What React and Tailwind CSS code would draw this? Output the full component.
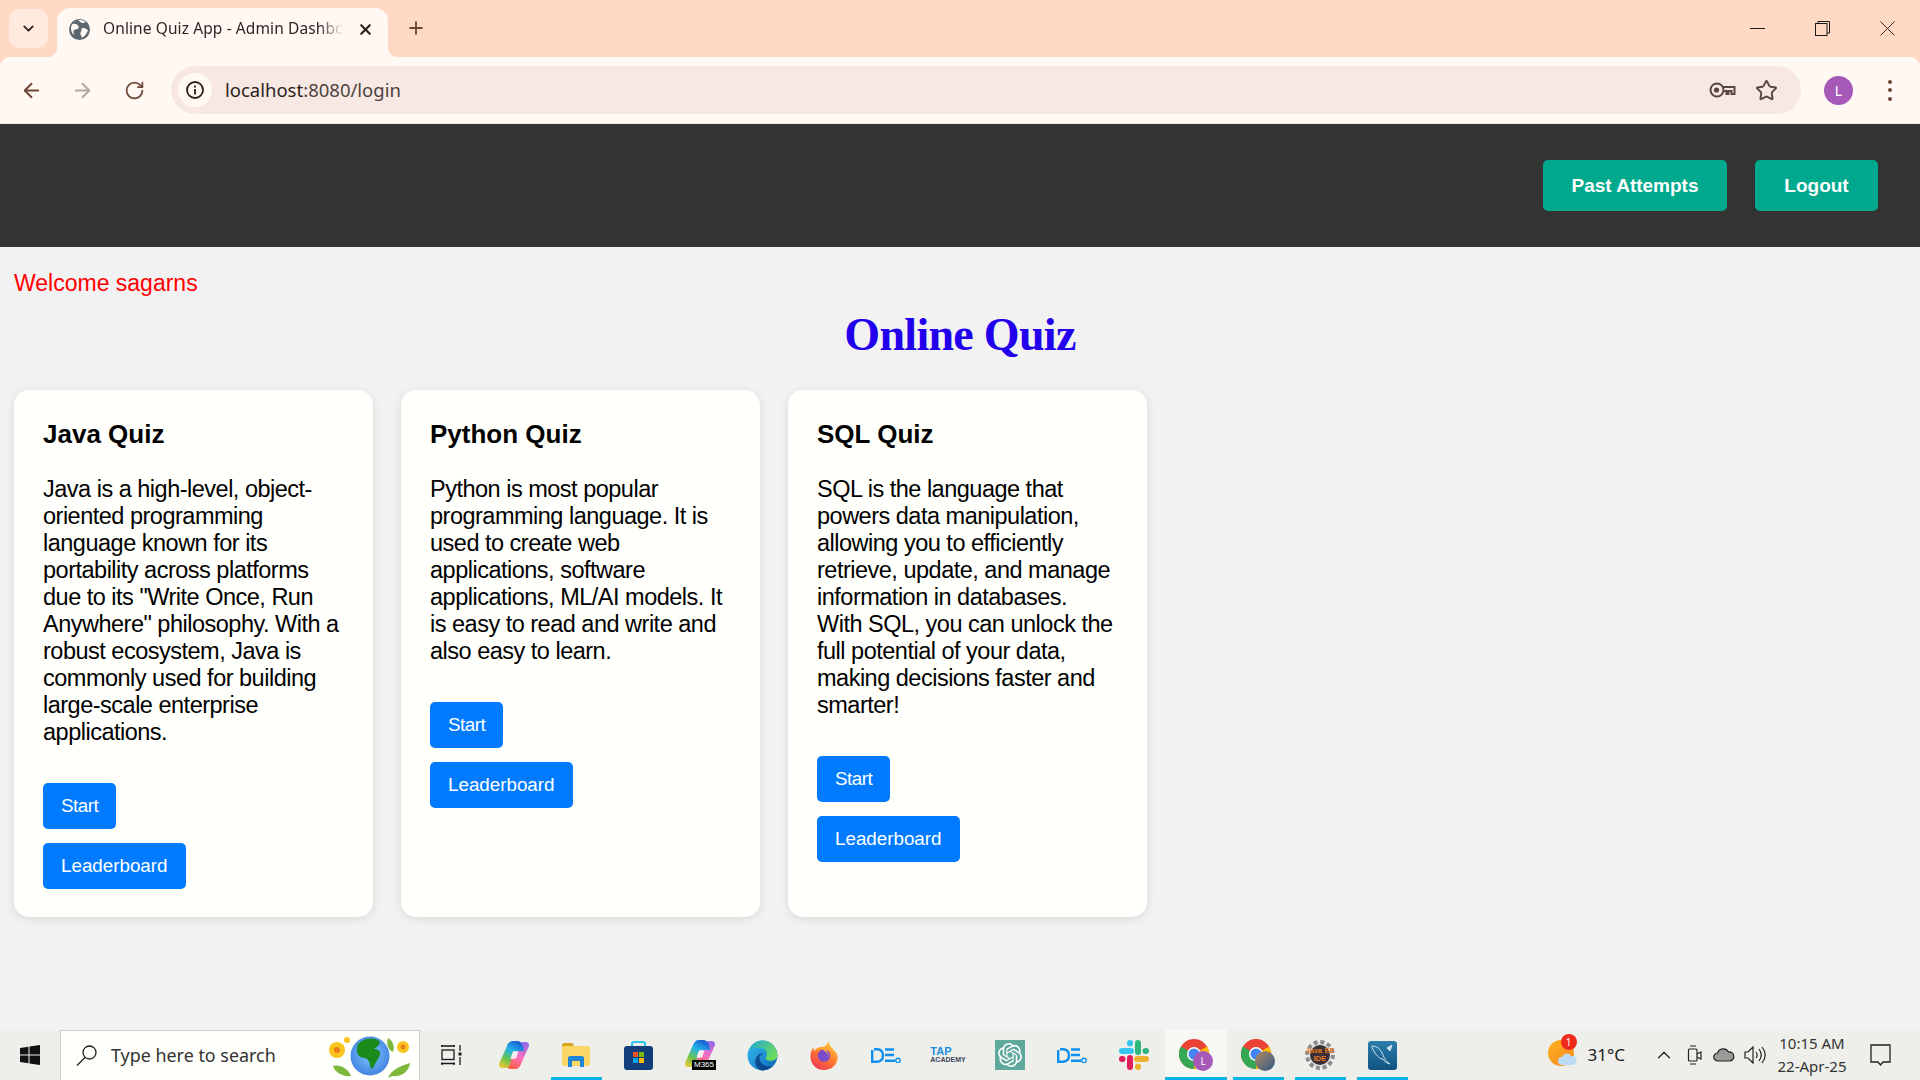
import { ArrowLeft, ArrowRight, RotateCw, ChevronDown, ChevronUp, X, Plus, Star } from "lucide-react";
import { SiOpenai } from "react-icons/si";

const quizzes = [
  {
    title: "Java Quiz",
    text: 'Java is a high-level, object-oriented programming language known for its portability across platforms due to its "Write Once, Run Anywhere" philosophy. With a robust ecosystem, Java is commonly used for building large-scale enterprise applications.',
  },
  {
    title: "Python Quiz",
    text: "Python is most popular programming language. It is used to create web applications, software applications, ML/AI models. It is easy to read and write and also easy to learn.",
  },
  {
    title: "SQL Quiz",
    text: "SQL is the language that powers data manipulation, allowing you to efficiently retrieve, update, and manage information in databases. With SQL, you can unlock the full potential of your data, making decisions faster and smarter!",
  },
];

function Globe() {
  return (
    <svg width="21" height="21" viewBox="0 0 20 20">
      <circle cx="10" cy="10" r="10" fill="#5b6670" />
      <path d="M3 5c3-1 5 0 6 2s-1 3-3 3-2 3-1 5c-3-1-4-7-2-10zM12 9c2-1 5 0 6 2-1 3-3 6-6 7 1-2-2-3-1-5s1-3 1-4zM9 1c2 0 5 0 7 2-2 1-4 1-5 0S9 2 9 1z" fill="#fff8f3" />
    </svg>
  );
}

function KeyIcon() {
  return (
    <svg width="27" height="16" viewBox="0 0 27 16" fill="none" stroke="#59463e" strokeWidth="2">
      <circle cx="8" cy="8" r="6.5" />
      <circle cx="7.5" cy="8" r="2.6" fill="#59463e" stroke="none" />
      <path d="M14 5h11.5v7h-3v-3h-3v3h-2v-3H14" />
    </svg>
  );
}

function WindowButtons() {
  return (
    <div className="ml-auto flex items-center h-full pb-[1px]">
      <div className="w-[65px] flex justify-center">
        <svg width="15" height="15" viewBox="0 0 15 15" stroke="#1a1a1a" strokeWidth="1"><path d="M0 7.500h15" /></svg>
      </div>
      <div className="w-[65px] flex justify-center">
        <svg width="15" height="15" viewBox="0 0 15 15" fill="none" stroke="#1a1a1a" strokeWidth="1">
          <rect x="0.5" y="2.5" width="11.5" height="12" />
          <path d="M3 2.5V.5h11.5V12H12" />
        </svg>
      </div>
      <div className="w-[65px] flex justify-center">
        <svg width="15" height="15" viewBox="0 0 15 15" stroke="#3a2a25" strokeWidth="1"><path d="M.5.500l14 14M14.500.500l-14 14" /></svg>
      </div>
    </div>
  );
}

function TabBar() {
  return (
    <div className="h-[57px] flex items-end pl-[9px]">
      <div className="w-[39px] h-[39px] mb-[9px] rounded-[10px] bg-[#ffeadd] flex items-center justify-center">
        <ChevronDown size={17} strokeWidth={2.6} color="#2b211c" />
      </div>
      <div className="relative ml-[9px] w-[331px] h-[49px] bg-[#fff8f3] rounded-t-[13px] flex items-center pl-[12px] pb-[7px]">
        <span className="absolute -left-[10px] bottom-0 w-[10px] h-[10px] bg-[radial-gradient(circle_at_0_0,transparent_10px,#fff8f3_10.5px)]" />
        <span className="absolute -right-[10px] bottom-0 w-[10px] h-[10px] bg-[radial-gradient(circle_at_100%_0,transparent_10px,#fff8f3_10.5px)]" />
        <Globe />
        <div className="w-[240px] ml-[13px] overflow-hidden whitespace-nowrap text-[15.5px] tracking-[0.1px] text-[#2f2623] font-['Noto_Sans',sans-serif] [mask-image:linear-gradient(to_right,black_90%,transparent)]">
          Online Quiz App - Admin Dashboard
        </div>
        <X size={17} strokeWidth={3} color="#2b211c" className="ml-[14px]" />
      </div>
      <Plus size={20} strokeWidth={2.2} color="#6d4636" className="ml-[18px] mb-[19px]" />
      <WindowButtons />
    </div>
  );
}

function Toolbar() {
  return (
    <div className="h-[67px] bg-[#fff8f3] border-b border-[#f1e5de] rounded-t-[10px] flex items-center pl-[20px]">
      <ArrowLeft size={23} strokeWidth={2} color="#6d4636" />
      <ArrowRight size={23} strokeWidth={2} color="#b5a59c" className="ml-[28px]" />
      <RotateCw size={21} strokeWidth={2} color="#6d4636" className="ml-[30px]" />
      <div className="ml-[26px] w-[1630px] h-[48px] rounded-full bg-[#f8e8e4] flex items-center pl-[7px] pr-[23px]">
        <div className="w-[34px] h-[34px] rounded-full bg-[#fff8f3] flex items-center justify-center">
          <svg width="20" height="20" viewBox="0 0 20 20" fill="none" stroke="#2b211c" strokeWidth="1.8">
            <circle cx="10" cy="10" r="8" />
            <path d="M10 9v5.5M10 5.5v2" />
          </svg>
        </div>
        <span className="ml-[13px] text-[18.5px] text-[#2b211c] font-['Noto_Sans',sans-serif]">
          localhost<span className="text-[#4d4340]">:8080/login</span>
        </span>
        <div className="ml-auto flex items-center gap-[19px]">
          <KeyIcon />
          <Star size={23} strokeWidth={2} color="#59463e" />
        </div>
      </div>
      <div className="ml-[23px] w-[29px] h-[29px] rounded-full bg-[#a659b9] flex items-center justify-center text-white text-[14px] font-['Noto_Sans',sans-serif]">
        L
      </div>
      <div className="ml-[35px] flex flex-col gap-[4.5px]">
        <span className="w-[4px] h-[4px] rounded-full bg-[#6d4636]" />
        <span className="w-[4px] h-[4px] rounded-full bg-[#6d4636]" />
        <span className="w-[4px] h-[4px] rounded-full bg-[#6d4636]" />
      </div>
    </div>
  );
}

function QuizCard({ title, text }) {
  return (
    <div className="w-[359px] bg-[#fffffb] rounded-[15px] shadow-[0_2px_10px_rgba(0,0,0,0.1)] pt-[30px] pb-[28px] px-[29px]">
      <h3 className="text-[26px] leading-[28px] font-bold text-black">{title}</h3>
      <p className="mt-[28px] text-[23.5px] leading-[27px] tracking-[-0.5px] text-black">{text}</p>
      <button className="block mt-[37px] h-[46px] px-[18px] bg-[#007bff] text-white text-[18.8px] tracking-[-0.5px] rounded-[5px]">Start</button>
      <button className="block mt-[14px] h-[46px] px-[18px] bg-[#007bff] text-white text-[18.8px] rounded-[5px]">Leaderboard</button>
    </div>
  );
}

// taskbar app icons
function Ribbons({ id }) {
  const ribbon = "M8 5c1-3 3-5 6-5h4c3 0 5 2 6 5l1 5h-8c-2 0-3 1-3.500 3L11 23c-.5 2-2 4-5 4H3c-2 0-3.500-2-3-4z";
  return (
    <svg width="30" height="28" viewBox="0 0 30 28">
      <defs>
        <linearGradient id={`${id}a`} x1="0.7" y1="0" x2="0.2" y2="1">
          <stop offset="0" stopColor="#1a5fd6" />
          <stop offset="0.35" stopColor="#22b4e6" />
          <stop offset="0.7" stopColor="#6fc24a" />
          <stop offset="1" stopColor="#e8c93a" />
        </linearGradient>
        <linearGradient id={`${id}b`} x1="0.7" y1="0" x2="0.3" y2="1">
          <stop offset="0" stopColor="#ff5f3c" />
          <stop offset="0.5" stopColor="#f76fc0" />
          <stop offset="1" stopColor="#9a6be8" />
        </linearGradient>
      </defs>
      <path d={ribbon} fill={`url(#${id}b)`} transform="rotate(180 15 14)" />
      <path d={ribbon} fill={`url(#${id}a)`} />
      <path d="M14 10.500h5.500l-2.500 7h-5.500z" fill="#f6eef2" />
    </svg>
  );
}

function Explorer() {
  return (
    <svg width="28" height="24" viewBox="0 0 28 24">
      <path d="M0 2c0-1 1-2 2-2h8l3 4H0z" fill="#d9a51f" />
      <rect x="0" y="3" width="28" height="20" rx="1.500" fill="#fcd765" />
      <path d="M6 24v-9c0-1 1-2 2-2h12c1 0 2 1 2 2v9h-4v-6h-8v6z" fill="#1d86d6" />
    </svg>
  );
}

function StoreIcon() {
  return (
    <svg width="29" height="29" viewBox="0 0 29 29">
      <path d="M8 6V2.500C8 1.500 9 1 10 1h9c1 0 2 .5 2 1.500V6" fill="none" stroke="#2fc0f0" strokeWidth="2" />
      <rect x="0" y="5" width="29" height="24" rx="3" fill="#123f7c" />
      <rect x="9" y="11" width="5" height="5" fill="#f25022" />
      <rect x="15" y="11" width="5" height="5" fill="#7fba00" />
      <rect x="9" y="17" width="5" height="5" fill="#00a4ef" />
      <rect x="15" y="17" width="5" height="5" fill="#ffb900" />
    </svg>
  );
}

function M365() {
  return (
    <div className="relative w-[30px] h-[30px]">
      <Ribbons id="m" />
      <span className="absolute -right-[1px] bottom-0 bg-black text-white text-[8px] leading-[10px] px-[2px] font-['Liberation_Sans',sans-serif]">M365</span>
    </div>
  );
}

function Edge() {
  return (
    <svg width="31" height="31" viewBox="0 0 30 30">
      <defs>
        <linearGradient id="ed1" x1="0" y1="0" x2="1" y2="1"><stop offset="0" stopColor="#35c1f1" /><stop offset="1" stopColor="#0b62b7" /></linearGradient>
        <linearGradient id="ed2" x1="0" y1="0" x2="1" y2="0.6"><stop offset="0" stopColor="#1fa7d8" /><stop offset="1" stopColor="#6bdc5a" /></linearGradient>
      </defs>
      <circle cx="15" cy="15" r="14.500" fill="url(#ed1)" />
      <path d="M2 10C5 2 12 0 16 .6c7 .6 13 6 13.400 14 .2 4-3 5.400-7 5.400-3 0-5-1-4.600-2.400C20 15 20 9 14 8 9 7 5 8 2 10z" fill="url(#ed2)" />
      <path d="M12 17c0 6 6 10 13 8-3 3-6 4.500-10 4.500C11 29 8 25 8 21c0-5 5-9 8-8-2 1-4 2-4 4z" fill="#0a4a8f" />
    </svg>
  );
}

function Firefox() {
  return (
    <svg width="30" height="31" viewBox="0 0 30 32">
      <defs>
        <linearGradient id="ff1" x1="0.8" y1="0" x2="0.2" y2="1"><stop offset="0" stopColor="#ffd43a" /><stop offset="0.5" stopColor="#ff7a2a" /><stop offset="1" stopColor="#f0355c" /></linearGradient>
      </defs>
      <path d="M15 31C6 31 1 24 1 17c0-4 1-7 3-9 0 2 1 3 2 3 2-3 5-4 8-4 3 0 4-3 6-6 0 3 1 5 4 8 3 3 5 6 5 9 0 7-6 13-14 13z" fill="url(#ff1)" />
      <circle cx="15" cy="16" r="6.500" fill="#7b4bc9" />
      <path d="M4 11c3-2 9-3 11 0 3 1 5 4 4 8 2-5-1-10-6-11-3 0-7 0-9 3z" fill="#ffb02e" />
    </svg>
  );
}

function DeIcon() {
  return (
    <svg width="30" height="15" viewBox="0 0 30 15" fill="none" stroke="#0e8fee" strokeWidth="2.400">
      <path d="M1.200 2v11.800h4c5 0 6.800-2.800 6.800-6.300 0-3.800-2-6.300-6-6.300H3" />
      <path d="M14 1.500h9M14 7h9M14 12.800h10" />
      <circle cx="27" cy="12.500" r="2.200" strokeWidth="1.400" />
    </svg>
  );
}

function Tap() {
  return (
    <div className="flex flex-col items-start font-['Liberation_Sans',sans-serif] font-bold">
      <span className="text-[11px] leading-[9px] text-[#1c8fe0]">TAP</span>
      <span className="text-[7px] leading-[7px] text-[#3a4658]">ACADEMY</span>
    </div>
  );
}

function Gpt() {
  return (
    <div className="w-[30px] h-[30px] bg-[#5fa99c] flex items-center justify-center">
      <SiOpenai size={24} color="#fff" />
    </div>
  );
}

function Slack() {
  return (
    <svg width="30" height="30" viewBox="0 0 30 30" strokeLinecap="round" strokeWidth="6" fill="none">
      <path d="M3 11h9M11 3v.5" stroke="#36c5f0" />
      <path d="M19 3v9M27 11h-.5" stroke="#2eb67d" />
      <path d="M27 19h-9M19 27v-.5" stroke="#ecb22e" />
      <path d="M11 27v-9M3 19h.5" stroke="#e01e5a" />
    </svg>
  );
}

function Chrome({ children }) {
  return (
    <div className="relative w-[34px] h-[32px]">
      <svg width="30" height="30" viewBox="0 0 30 30">
        <circle cx="15" cy="15" r="15" fill="#ea4335" />
        <path d="M15 15L2 7.500A15 15 0 0 0 15 30z" fill="#34a853" />
        <path d="M15 15l0 15A15 15 0 0 0 28 7.500z" fill="#fbbc05" />
        <circle cx="15" cy="15" r="7" fill="#fff" />
        <circle cx="15" cy="15" r="5.500" fill="#4285f4" />
      </svg>
      {children}
    </div>
  );
}

function JavaEE() {
  return (
    <div className="relative w-[30px] h-[30px]">
      <svg width="30" height="30" viewBox="0 0 30 30">
        <circle cx="15" cy="15" r="13" fill="#e4e4e2" stroke="#8c8c8c" strokeWidth="4" strokeDasharray="4 2.800" />
        <circle cx="15" cy="15" r="10" fill="#3a2f38" />
      </svg>
      <span className="absolute inset-0 flex flex-col items-center justify-center text-[7.5px] leading-[8px] font-bold text-[#e8791d] font-['Liberation_Sans',sans-serif]">
        <span>Java EE</span>
        <span>IDE</span>
      </span>
    </div>
  );
}

function MySqlIcon() {
  return (
    <div className="w-[29px] h-[29px] rounded-[3px] bg-gradient-to-b from-[#2d7fae] to-[#11527f] flex items-center justify-center">
      <svg width="25" height="25" viewBox="0 0 25 25" fill="none" stroke="#cfe3ef" strokeWidth="1">
        <path d="M2 3c5 0 8 3 10 7s3 8 8 11c-4-1-6-3-7-5-3 0-6-3-8-6S2 5 2 3z" />
        <path d="M17 5l5-3-2 6z" fill="#cfe3ef" />
      </svg>
    </div>
  );
}

function SearchBoxArt() {
  return (
    <svg width="84" height="44" viewBox="0 0 84 44">
      <defs>
        <radialGradient id="earth" cx="0.5" cy="0.45" r="0.6"><stop offset="0" stopColor="#7cc6ff" /><stop offset="1" stopColor="#3f7fe0" /></radialGradient>
      </defs>
      <circle cx="42" cy="22" r="19.500" fill="url(#earth)" />
      <path d="M30 10c6-6 16-7 21-3 3 3-3 6-5 8 3 0 6 1 6 4 0 5-4 8-6 13-1 4-4 3-4-1 0-4-3-6-5-7-5 0-8-3-8-7 0-3 0-5 1-7z" fill="#1a8a1a" />
      <circle cx="9" cy="16" r="8" fill="#f9c51c" />
      <circle cx="9" cy="16" r="3" fill="#ea7a1c" />
      <circle cx="19" cy="6" r="3" fill="#f9c51c" />
      <circle cx="75" cy="13" r="6" fill="#f9c51c" />
      <circle cx="75" cy="13" r="2.400" fill="#ea7a1c" />
      <path d="M60 4c5 3 7 8 5 14-5-2-7-8-5-14z" fill="#7cb83a" />
      <path d="M5 32c6-2 15 2 18 10-7 1-16-3-18-10z" fill="#7cb83a" />
      <path d="M60 44c3-8 12-12 22-15-1 9-9 14-18 13z" fill="#7cb83a" />
    </svg>
  );
}

function WeatherIcon() {
  return (
    <div className="relative w-[30px] h-[32px]">
      <div className="absolute left-0 top-[1px] w-[26px] h-[26px] rounded-full bg-gradient-to-br from-[#ffb020] to-[#f58a1f]" />
      <svg className="absolute left-[9px] top-[13px]" width="20" height="14" viewBox="0 0 20 14">
        <path d="M5 13a4 4 0 0 1 0-8 5 5 0 0 1 9-1 4.500 4.500 0 0 1 2 9z" fill="#bcdcf5" />
      </svg>
      <span className="absolute left-[13px] -top-[5px] w-[16px] h-[16px] rounded-full bg-[#f02a1a] text-white text-[10px] leading-[16px] text-center font-['Noto_Sans',sans-serif]">1</span>
    </div>
  );
}

function TaskView() {
  return (
    <svg width="22" height="20" viewBox="0 0 22 20" fill="none" stroke="#1a1a1a" strokeWidth="1.300">
      <rect x="1" y="5" width="12" height="9.500" />
      <path d="M0 1h14M0 18.500h14M1 0v2M13 0v2M1 17.500V20M13 17.500V20M19 0v6M19 12v8" />
      <rect x="17.500" y="7.500" width="3" height="3" fill="#1a1a1a" stroke="none" />
    </svg>
  );
}

function Taskbar() {
  const apps = [
    { el: <TaskView /> },
    { el: <Ribbons id="c" /> },
    { el: <Explorer />, open: true },
    { el: <StoreIcon /> },
    { el: <M365 /> },
    { el: <Edge /> },
    { el: <Firefox /> },
    { el: <DeIcon /> },
    { el: <Tap /> },
    { el: <Gpt /> },
    { el: <DeIcon /> },
    { el: <Slack /> },
    {
      el: (
        <Chrome>
          <span className="absolute right-0 bottom-0 w-[20px] h-[20px] rounded-full bg-[#a659b9] text-white text-[10px] leading-[20px] text-center font-['Noto_Sans',sans-serif]">L</span>
        </Chrome>
      ),
      active: true,
    },
    {
      el: (
        <Chrome>
          <span className="absolute right-0 bottom-0 w-[20px] h-[20px] rounded-full bg-gradient-to-br from-[#b58a5e] to-[#28567f]" />
        </Chrome>
      ),
      open: true,
    },
    { el: <JavaEE />, open: true },
    { el: <MySqlIcon />, open: true },
  ];

  return (
    <div className="h-[50px] bg-[#eeeeeb] flex items-stretch font-['Noto_Sans',sans-serif] text-[#222]">
      <div className="w-[60px] flex items-center justify-center">
        <svg width="20" height="20" viewBox="0 0 20 20" fill="#111">
          <path d="M0 3l8.500-1.200V9.500H0zM9.500 1.600L20 0v9.500H9.500zM0 10.500h8.500v7.700L0 17zM9.500 10.500H20V20L9.500 18.400z" />
        </svg>
      </div>
      <div className="w-[360px] bg-[#fffffb] border border-[#cfcfcf] border-b-0 flex items-center pl-[15px] pr-[7px]">
        <svg width="21" height="21" viewBox="0 0 21 21" fill="none" stroke="#222" strokeWidth="1.300">
          <circle cx="13.500" cy="7.500" r="6.500" />
          <path d="M9 12.500L1 20.500" />
        </svg>
        <span className="ml-[14px] text-[17.9px] text-[#333]">Type here to search</span>
        <div className="ml-auto"><SearchBoxArt /></div>
      </div>
      <div className="flex ml-[1px]">
        {apps.map((app, i) => (
          <div
            key={i}
            className={`w-[62px] flex items-center justify-center relative ${app.active ? "bg-[#f7f7f4]" : ""}`}
          >
            {app.el}
            {app.open && <span className="absolute left-[5.5px] right-[5.5px] bottom-0 h-[3px] bg-[#06b3e4]" />}
            {app.active && <span className="absolute left-0 right-0 bottom-0 h-[3px] bg-[#06b3e4]" />}
          </div>
        ))}
      </div>
      <div className="ml-auto flex items-center">
        <WeatherIcon />
        <span className="ml-[10px] text-[17px]">31°C</span>
        <ChevronUp size={22} strokeWidth={1.3} className="ml-[28px]" />
        <svg className="ml-[12px]" width="15" height="22" viewBox="0 0 15 22" fill="none" stroke="#222" strokeWidth="1.200">
          <rect x="1.500" y="5" width="8.500" height="12" rx="1" />
          <path d="M10 10l4-2v7l-4-2M3 2h6M3 20h6" />
        </svg>
        <svg className="ml-[11px]" width="22" height="16" viewBox="0 0 22 16" fill="#9a9a98" stroke="#222" strokeWidth="1.200">
          <path d="M5 14a4 4 0 0 1-.5-8 6 6 0 0 1 11-1 4.500 4.500 0 0 1 1.500 9z" />
        </svg>
        <svg className="ml-[9px]" width="22" height="20" viewBox="0 0 22 20" fill="none" stroke="#222" strokeWidth="1.200">
          <path d="M1 7h3l5-5v16l-5-5H1zM12 7c1.500 2 1.500 4 0 6M15 4c3 4 3 8 0 12M18 2c4 5 4 11 0 16" />
        </svg>
        <div className="ml-[3px] w-[86px] flex flex-col items-center text-[15px] leading-[23px] text-[#333]">
          <span>10:15 AM</span>
          <span>22-Apr-25</span>
        </div>
        <svg className="ml-[15px] mr-[29px]" width="21" height="23" viewBox="0 0 21 23" fill="none" stroke="#222" strokeWidth="1.300">
          <path d="M1 1h19v17h-7l-2.500 3L8 18H1z" />
        </svg>
      </div>
    </div>
  );
}

export default function App() {
  return (
    <div className="h-screen flex flex-col bg-[#f2f2f2] overflow-hidden font-['Liberation_Sans',Arial,sans-serif]">
      <div className="bg-[#ffd9c4] shrink-0">
        <TabBar />
        <Toolbar />
      </div>
      <header className="h-[123px] shrink-0 bg-[#333333] flex items-center justify-end gap-[28px] pr-[42px]">
        <button className="w-[184px] h-[51px] pt-[1px] rounded-[5px] bg-[#00a98d] text-white text-[19px] font-bold">Past Attempts</button>
        <button className="w-[123px] h-[51px] pt-[1px] rounded-[5px] bg-[#00a98d] text-white text-[19px] font-bold">Logout</button>
      </header>
      <main className="flex-1 pl-[14px] pt-[23px]">
        <div className="text-[23px] leading-[27px] text-[#ff0000]">Welcome sagarns</div>
        <h1 className="mt-[11px] -ml-[14px] text-center text-[46px] leading-[54px] tracking-[-0.7px] font-bold text-[#2200ee] font-['Liberation_Serif',serif]">Online Quiz</h1>
        <div className="mt-[28px] flex gap-[28px]">
          {quizzes.map((q) => (
            <QuizCard key={q.title} {...q} />
          ))}
        </div>
      </main>
      <Taskbar />
    </div>
  );
}
